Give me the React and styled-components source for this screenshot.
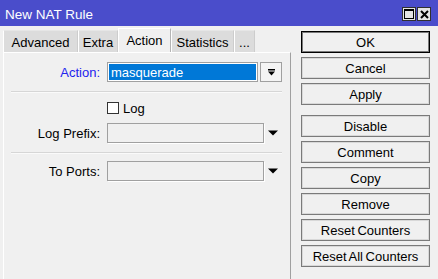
import styled, { createGlobalStyle } from "styled-components";

const GlobalStyle = createGlobalStyle`
  html, body {
    margin: 0;
    padding: 0;
    background: #f0f0f0;
  }
  body {
    font-family: "Liberation Sans", Arial, sans-serif;
    font-size: 13px;
    color: #000;
  }
  * {
    box-sizing: border-box;
  }
`;

const Window = styled.div`
  width: 438px;
  height: 279px;
  overflow: hidden;
  background: #f0f0f0;
  display: flex;
  flex-direction: column;
`;

const TitleBar = styled.div`
  height: 26px;
  flex: none;
  background: #4a4dcb;
  color: #fff;
  display: flex;
  align-items: center;
  padding: 0 7px 0 5px;
`;

const Title = styled.span`
  flex: 1;
  font-size: 13.5px;
  padding-top: 2px;
`;

const TitleButtons = styled.div`
  display: flex;
  gap: 1px;
  margin-top: 2px;
`;

const TitleButton = styled.div`
  width: 14px;
  height: 14px;
  border: 1px solid #303030;
  background: #e4e4e4;
  display: flex;
  align-items: center;
  justify-content: center;
`;

const Body = styled.div`
  flex: 1;
  display: flex;
  gap: 10px;
  padding: 2px 8px 0 3px;
  min-height: 0;
`;

const Left = styled.div`
  width: 288px;
  display: flex;
  flex-direction: column;
`;

const Tabs = styled.div`
  display: flex;
  align-items: flex-end;
  height: 24px;
  flex: none;
`;

const Tab = styled.div`
  width: ${(p) => p.$w}px;
  height: ${(p) => (p.$active ? 24 : 22)}px;
  padding-top: ${(p) => (p.$active ? 0 : 1)}px;
  display: flex;
  align-items: center;
  justify-content: center;
  background: ${(p) => (p.$active ? "#f0f0f0" : "#dcdcdc")};
  border-top: 1px solid ${(p) => (p.$active ? "#ffffff" : "#e6e6e6")};
  border-left: 1px solid #ffffff;
  border-right: 1px solid ${(p) => (p.$active ? "#b4b4b4" : "#cdcdcd")};
  white-space: nowrap;
`;

const Panel = styled.div`
  flex: 1;
  background: #f0f0f0;
  border-top: 1px solid #ffffff;
  border-left: 1px solid #ffffff;
  border-right: 1px solid #a0a0a0;
  padding: 9px 8px 0 7px;
  display: flex;
  flex-direction: column;
`;

const Row = styled.div`
  display: flex;
  align-items: center;
  height: ${(p) => p.$h || 20}px;
  margin-top: ${(p) => p.$mt || 0}px;
`;

const Label = styled.span`
  width: 89px;
  margin-right: 7px;
  text-align: right;
  color: ${(p) => (p.$accent ? "#2222ee" : "#000")};
  white-space: nowrap;
`;

const SelectBox = styled.div`
  width: 151px;
  height: 20px;
  border: 1px solid #a0a0a0;
  background: #fff;
  padding: 1px;
`;

const Selected = styled.div`
  height: 100%;
  background: #0078d7;
  color: #fff;
  padding-left: 2px;
  display: flex;
  align-items: center;
`;

const DropButton = styled.div`
  width: 22px;
  height: 20px;
  margin-left: 2px;
  border: 1px solid #a0a0a0;
  background: #f4f4f4;
  display: flex;
  align-items: center;
  justify-content: center;
`;

const Input = styled.div`
  width: 157px;
  height: 20px;
  border: 1px solid #a0a0a0;
  background: #f0f0f0;
  box-shadow: 1px 1px 0 #ffffff;
`;

const Arrow = styled.svg`
  margin-left: 4px;
  flex: none;
`;

const Separator = styled.div`
  height: 1px;
  background: #d6d6d6;
  box-shadow: 0 1px 0 #fafafa;
  margin-top: ${(p) => p.$mt}px;
`;

const Check = styled.span`
  width: 12px;
  height: 12px;
  border: 1px solid #333;
  background: #fff;
  margin-left: 96px;
  margin-right: 4px;
`;

const Right = styled.div`
  width: 129px;
  display: flex;
  flex-direction: column;
  padding-top: 3px;
`;

const Button = styled.div`
  height: 22px;
  margin-top: ${(p) => p.$mt ?? 4}px;
  border: 1px solid ${(p) => (p.$default ? "#000" : "#7a7a7a")};
  box-shadow: inset 0 0 0 1px ${(p) => (p.$default ? "#7a7a7a" : "#d8d8d8")};
  background: #f0f0f0;
  display: flex;
  align-items: center;
  justify-content: center;
  white-space: nowrap;
  word-spacing: -1px;
`;

function DownTriangle() {
  return (
    <Arrow width="10" height="6" viewBox="0 0 10 6">
      <path d="M0 0.5H10L5 5.5Z" fill="#000" />
    </Arrow>
  );
}

const tabs = [
  ["Advanced", 75],
  ["Extra", 40],
  ["Action", 53, true],
  ["Statistics", 63],
  ["...", 21],
];

const buttons = [
  ["OK", 0, true],
  ["Cancel", 4],
  ["Apply", 4],
  ["Disable", 10],
  ["Comment", 4],
  ["Copy", 4],
  ["Remove", 4],
  ["Reset Counters", 4],
  ["Reset All Counters", 4],
];

export default function App() {
  return (
    <Window>
      <GlobalStyle />
      <TitleBar>
        <Title>New NAT Rule</Title>
        <TitleButtons>
          <TitleButton>
            <svg width="10" height="10" viewBox="0 0 10 10">
              <rect x="0.5" y="0.5" width="9" height="9" fill="none" stroke="#000" />
              <rect x="0" y="0" width="10" height="2" fill="#000" />
            </svg>
          </TitleButton>
          <TitleButton>
            <svg width="9" height="9" viewBox="0 0 9 9">
              <path d="M1 1L8 8M8 1L1 8" stroke="#000" strokeWidth="2" />
            </svg>
          </TitleButton>
        </TitleButtons>
      </TitleBar>

      <Body>
        <Left>
          <Tabs>
            {tabs.map(([text, w, active]) => (
              <Tab key={text} $w={w} $active={active}>
                {text}
              </Tab>
            ))}
          </Tabs>
          <Panel>
            <Row>
              <Label $accent>Action:</Label>
              <SelectBox>
                <Selected>masquerade</Selected>
              </SelectBox>
              <DropButton>
                <svg width="7" height="7" viewBox="0 0 7 7">
                  <rect x="0" y="0" width="7" height="1.5" fill="#000" />
                  <path d="M0 2.5H7L3.5 6.5Z" fill="#000" />
                </svg>
              </DropButton>
            </Row>
            <Separator $mt={9} />
            <Row $h={12} $mt={10}>
              <Check />
              <span>Log</span>
            </Row>
            <Row $mt={9}>
              <Label>Log Prefix:</Label>
              <Input />
              <DownTriangle />
            </Row>
            <Separator $mt={9} />
            <Row $mt={8}>
              <Label>To Ports:</Label>
              <Input />
              <DownTriangle />
            </Row>
          </Panel>
        </Left>

        <Right>
          {buttons.map(([text, mt, def]) => (
            <Button key={text} $mt={mt} $default={def}>
              {text}
            </Button>
          ))}
        </Right>
      </Body>
    </Window>
  );
}
